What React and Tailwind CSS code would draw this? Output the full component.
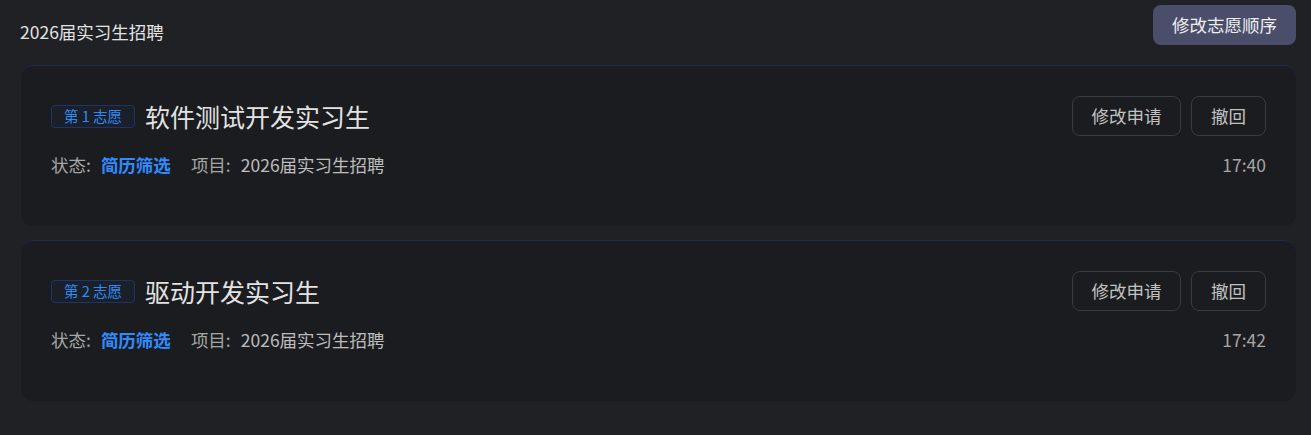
const apps = [
  { rank: 1, title: "软件测试开发实习生", status: "简历筛选", project: "2026届实习生招聘", time: "17:40" },
  { rank: 2, title: "驱动开发实习生", status: "简历筛选", project: "2026届实习生招聘", time: "17:42" },
];

const font = { fontFamily: '"Noto Sans CJK SC", "Liberation Sans", sans-serif' };

export default function App() {
  return (
    <div className="min-h-[435px] bg-[#202124] pl-[21px] pr-[15px] pt-[5px]" style={font}>
      {/* Header */}
      <div className="flex items-center justify-between h-[40px]">
        <h1 className="text-[17.5px] text-[#e3e3e3] -ml-px mt-[15px]">2026届实习生招聘</h1>
        <button className="h-[40px] w-[143px] rounded-[8px] bg-[#4b4e6b] text-[17.5px] text-[#eeeeee]">
          修改志愿顺序
        </button>
      </div>

      {/* Applications */}
      <div className="mt-[20px] flex flex-col gap-[14px]">
        {apps.map((a) => (
          <div
            key={a.rank}
            className="h-[161px] rounded-[12px] bg-[#1b1c1f] border-t border-[#1f2b52] px-[30px] pt-[30px]"
          >
            <div className="flex items-center justify-between">
              <div className="flex items-center gap-[10px]">
                <span className="h-[23px] w-[84px] justify-center flex items-center rounded-[4px] border border-[#1d3563] bg-[#1a1f2a] text-[14.5px] text-[#2f8cf5] whitespace-pre">
                  {`第 ${a.rank} 志愿`}
                </span>
                <h2 className="text-[25px] text-[#e3e3e3] leading-none">{a.title}</h2>
              </div>
              <div className="flex gap-[10px]">
                <button className="h-[40px] w-[109px] rounded-[8px] border border-[#3a3b3f] text-[17.5px] text-[#c2c2c2]">
                  修改申请
                </button>
                <button className="h-[40px] w-[75px] rounded-[8px] border border-[#3a3b3f] text-[17.5px] text-[#c2c2c2]">
                  撤回
                </button>
              </div>
            </div>
            <div className="mt-[17px] flex items-center justify-between text-[17.5px] leading-[24px]">
              <div className="flex items-center text-[#a6a6a6]">
                <span>状态:</span>
                <span className="ml-[10px] font-bold text-[#2f8cff]">{a.status}</span>
                <span className="ml-[20px]">项目:</span>
                <span className="ml-[10px] text-[#bdbdbd]">{a.project}</span>
              </div>
              <span className="text-[#a6a6a6]">{a.time}</span>
            </div>
          </div>
        ))}
      </div>
    </div>
  );
}
